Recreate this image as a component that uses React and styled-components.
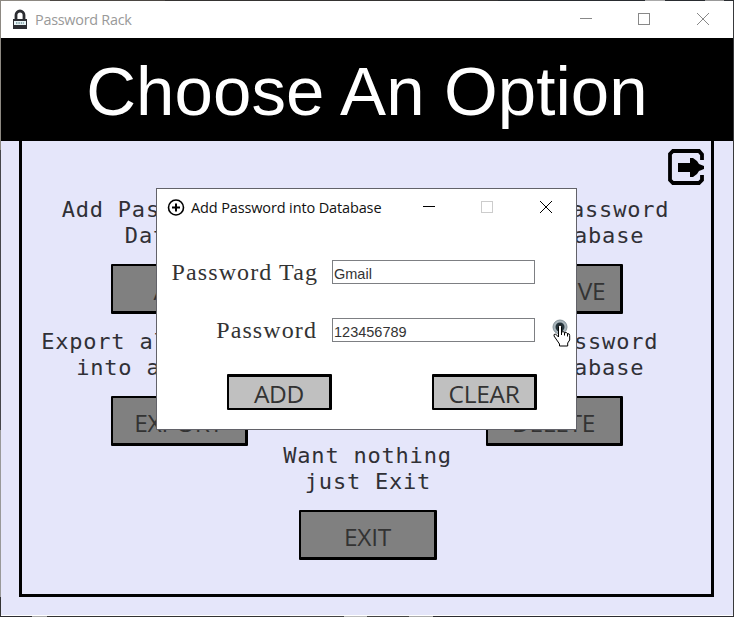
import React from "react";
import styled, { createGlobalStyle } from "styled-components";

const Global = createGlobalStyle`
  *{box-sizing:border-box}
  body{margin:0;overflow:hidden;background:#333}
`;

const Desktop = styled.div`
  width: 734px;
  height: 617px;
  padding: 1px;
  position: relative;
  background:
    linear-gradient(90deg, #8d8982 0 50px, #4b4642 50px 165px, #353331 165px 166px, #353331 166px 498px, #292c30 498px 645px, #aaa 645px 665px, #292c30 665px 705px, #999 705px 724px, #292c30 724px) 0 0 / 734px 1px no-repeat,
    linear-gradient(90deg, #2c2c31 0 32px, #aaa 32px 47px, #333 47px 290px, #444 290px 344px, #bbb 344px 367px, #444 367px 409px, #aaa 409px 433px, #2c2c31 433px) 0 616px / 734px 1px no-repeat,
    linear-gradient(180deg, #8d8982 0 150px, #45454b 150px 430px, #999 430px 597px, #333 597px) 0 0 / 1px 617px no-repeat,
    #38393b;
`;

const Window = styled.main`
  width: 732px;
  height: 615px;
  background: #e5e6fa;
  border-bottom: 1px solid #fff;
  display: flex;
  flex-direction: column;
`;

const TitleBar = styled.header`
  height: 37px;
  flex: none;
  background: #fff;
  display: flex;
  align-items: center;
  color: ${(p) => (p.$dialog ? "#111" : "#999")};
  font: ${(p) => (p.$dialog ? 14.5 : 14.4)}px/20px "Open Sans", "Noto Sans", sans-serif;
  padding-left: ${(p) => (p.$dialog ? 10 : 11)}px;
`;

const Caption = styled.span`
  margin-left: ${(p) => p.$gap}px;
  flex: 1;
  white-space: nowrap;
  letter-spacing: ${(p) => p.$track}px;
`;

const Controls = styled.svg`
  flex: none;
  display: block;
  width: 130px;
  height: 14px;
  margin: 0 23px 2px 0;
`;

const Banner = styled.h1`
  margin: 0;
  height: 103px;
  flex: none;
  background: #000;
  color: #fff;
  font: 400 69px/107px "Liberation Sans", Arial, sans-serif;
  letter-spacing: 0.1px;
  text-align: center;
  white-space: nowrap;
`;

const Frame = styled.section`
  margin: 0 0 0 18px;
  width: 695px;
  height: 456px;
  border: 3px solid #000;
  border-top: 0;
  padding-top: 56px;
  position: relative;
`;

const LogoutIcon = styled.svg`
  position: absolute;
  left: 645px;
  top: 7px;
  width: 38px;
  height: 38px;
`;

const OptionRow = styled.div`
  display: flex;
  justify-content: ${(p) => (p.$center ? "center" : "flex-start")};
  gap: 75px;
  padding-left: ${(p) => (p.$center ? 3 : 7)}px;
  height: ${(p) => p.$height}px;
`;

const Option = styled.div`
  width: 300px;
  display: flex;
  flex-direction: column;
  align-items: center;
`;

const OptionText = styled.div`
  font: 22px/26px "DejaVu Sans Mono", monospace;
  letter-spacing: 0.79px;
  color: #303036;
  text-align: center;
  white-space: pre;
`;

const Line = styled.div`
  margin-left: ${(p) => p.$shift || 0}px;
`;

const Button = styled.button`
  flex: none;
  width: ${(p) => (p.$light ? 105 : p.$wide ? 138 : 137)}px;
  height: ${(p) => (p.$light ? 36 : 50)}px;
  margin: ${(p) => (p.$light ? 0 : "15px 0 0")};
  padding: ${(p) => (p.$light ? "2px 0 0" : "4px 0 0")};
  border: solid #000;
  border-width: ${(p) => (p.$light ? "3px 3px 2px 2px" : "2px 3px 3px 2px")};
  border-radius: 1px;
  background: ${(p) => (p.$light ? "#c0c0c0" : "#808080")};
  color: #333;
  font: 400 24.5px/28px "Open Sans", "Noto Sans", sans-serif;
  letter-spacing: -0.3px;
  display: flex;
  align-items: center;
  justify-content: center;
`;

const Dialog = styled.section`
  position: absolute;
  left: 156px;
  top: 188px;
  width: 421px;
  height: 242px;
  border: 1px solid #626269;
  background: #fff;
`;

const Field = styled.label`
  height: 24px;
  display: flex;
  align-items: center;
  margin-top: ${(p) => p.$top}px;
`;

const Label = styled.span`
  width: ${(p) => p.$end}px;
  margin-right: ${(p) => 175 - p.$end}px;
  text-align: right;
  white-space: nowrap;
  font: 24px/24px "Liberation Serif", serif;
  letter-spacing: 1.1px;
  color: #333;
`;

const Input = styled.input`
  width: 203px;
  height: 24px;
  border: 1px solid #7d7f83;
  border-radius: 0;
  background: #fff;
  padding: 3px 0 0 1px;
  font: 14.5px/18px "Liberation Sans", Arial, sans-serif;
  color: #333;
  outline: 0;
`;

const EyeIcon = styled.svg`
  width: 22px;
  height: 32px;
  margin: 8px 0 0 15px;
  flex: none;
`;

const Actions = styled.div`
  display: flex;
  gap: 100px;
  margin: 32px 0 0 70px;
`;

function WindowControls({ dialog }) {
  const c = dialog ? "#000" : "#888";
  return (
    <Controls viewBox="0 0 130 14" fill="none" stroke={c} shapeRendering="crispEdges">
      <path d="M0 6.5h12" />
      <path d="M58.5 1.5h11v11h-11z" stroke={dialog ? "#ccc" : c} />
      <path d="M117 1l12 12M129 1l-12 12" shapeRendering="auto" />
    </Controls>
  );
}

export default function App() {
  return (
    <Desktop>
      <Global />
      <Window>
        <TitleBar>
          <svg width="16" height="22" viewBox="0 0 16 22">
            <path d="M4 11V6a4 4 0 0 1 8 0V11" fill="none" stroke="#2c2d32" strokeWidth="2.8" />
            <path d="M1 10h14v10H1z" fill="#2c2d32" />
            <path d="M2 12h12v4H2z" fill="#e8f4f6" />
            <path d="M4 14h8" stroke="#35626b" strokeDasharray="1.4 1" />
          </svg>
          <Caption $gap={7} $track={-0.25}>Password Rack</Caption>
          <WindowControls />
        </TitleBar>
        <Banner>Choose An Option</Banner>
        <Frame>
          <LogoutIcon viewBox="0 0 38 38">
            <path d="M35 12V6.5L32 3H6L3 6v26l3 3h26l3-3v-5" fill="none" stroke="#000" strokeWidth="3.800" />
            <path d="M11 15h12V10h3l4 3 2 3 5 2v3l-5 2-2 3-4 3h-3V24H11z" fill="#000" />
          </LogoutIcon>
          <OptionRow $height={132}>
            <Option>
              <OptionText><Line $shift={4}>Add Password into</Line><Line $shift={4}>Database</Line></OptionText>
              <Button>ADD</Button>
            </Option>
            <Option>
              <OptionText><Line $shift={-8}>Retrieve Password</Line><Line $shift={-2}>from Database</Line></OptionText>
              <Button>RETRIEVE</Button>
            </Option>
          </OptionRow>
          <OptionRow $height={114}>
            <Option>
              <OptionText><Line $shift={5}>Export all Passwords</Line><Line $shift={5}>into a CSV file</Line></OptionText>
              <Button>EXPORT</Button>
            </Option>
            <Option>
              <OptionText><Line $shift={-2}>Delete Password</Line><Line $shift={-2}>from Database</Line></OptionText>
              <Button>DELETE</Button>
            </Option>
          </OptionRow>
          <OptionRow $center $height={120}>
            <Option>
              <OptionText><Line $shift={-1}>Want nothing</Line><Line>just Exit</Line></OptionText>
              <Button $wide>EXIT</Button>
            </Option>
          </OptionRow>
        </Frame>
      </Window>
      <Dialog>
        <TitleBar $dialog>
          <svg width="18" height="18" viewBox="0 0 18 18" fill="none" stroke="#000" strokeWidth="1.600">
            <circle cx="9" cy="8.500" r="7.500" />
            <path d="M9 4.500v8M5 8.500h8" strokeWidth="2" />
          </svg>
          <Caption $gap={6} $track={-0.13}>Add Password into Database</Caption>
          <WindowControls dialog />
        </TitleBar>
        <Field $top={34}>
          <Label $end={161}>Password Tag</Label>
          <Input defaultValue="Gmail" />
        </Field>
        <Field $top={34}>
          <Label $end={160}>Password</Label>
          <Input defaultValue="123456789" />
          <EyeIcon viewBox="0 0 22 32">
            <circle cx="10" cy="9" r="7" fill="#a9b5bb" stroke="#85939a" />
            <circle cx="10" cy="9" r="4.500" fill="#25343b" />
            <path d="M8.500 19V8.500q0-1.500 1.500-1.500t1.500 1.500V14q2-1 3 .8 2-1 3 .8 2.200-.3 2.200 2V22l-2 3v3H9.500V26l-5.500-8q-.5-2 1.500-2z" fill="#fff" stroke="#000" />
            <path d="M11.500 13v4M14.500 14.500v3M17.500 15.500v3" stroke="#000" />
          </EyeIcon>
        </Field>
        <Actions>
          <Button $light>ADD</Button>
          <Button $light>CLEAR</Button>
        </Actions>
      </Dialog>
    </Desktop>
  );
}
